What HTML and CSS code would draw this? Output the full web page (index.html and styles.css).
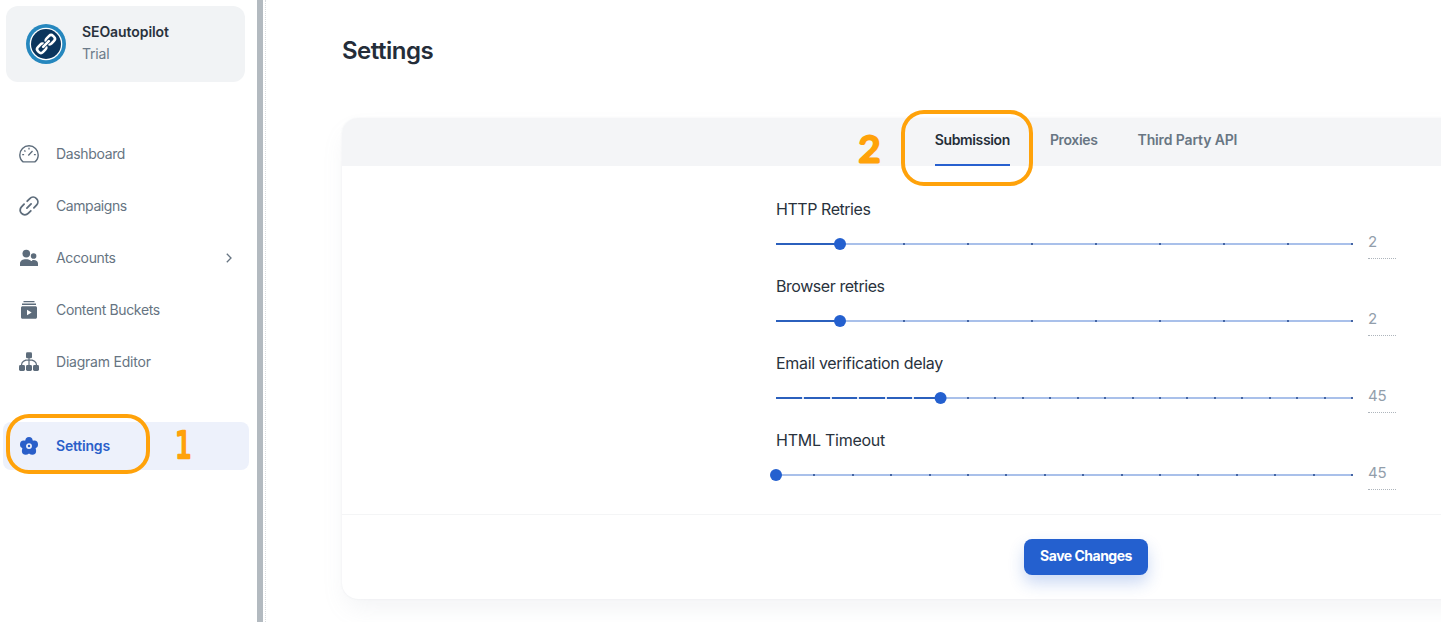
FILE: index.html
```html
<!DOCTYPE html>
<html lang="en">
<head>
<meta charset="utf-8">
<title>Settings</title>
<link rel="stylesheet" href="styles.css">
</head>
<body>
<div class="app">
  <aside class="sidebar">
    <div class="account">
      <svg class="logo" viewBox="0 0 40 40">
        <circle cx="20" cy="20" r="20" fill="#2687be"/>
        <circle cx="20" cy="20" r="16.3" fill="#fff"/>
        <circle cx="20" cy="20" r="15" fill="#0b355d"/>
        <g transform="rotate(-45 20 20)" fill="none" stroke="#fff" stroke-width="2.6">
          <rect x="9.300" y="16.500" width="9" height="7" rx="2.800"/>
          <rect x="21.700" y="16.500" width="9" height="7" rx="2.800"/>
          <path d="M14.500 20h11" stroke="#0b355d" stroke-width="4.200"/>
          <path d="M16 20h8" stroke-linecap="round" stroke-width="2.600"/>
        </g>
      </svg>
      <div class="who"><div class="name"><span>SEOautopilot</span></div><div class="plan"><span>Trial</span></div></div>
    </div>
    <nav class="menu">
      <a class="item">
        <svg class="icon" viewBox="0 0 20 20" fill="none" stroke="currentColor" stroke-width="1.4">
          <path d="M4.1 17.9C2.1 16.3.8 13.8.8 11a9.2 9.2 0 0 1 18.4 0c0 2.8-1.3 5.300-3.300 6.900z" stroke-linejoin="round"/>
          <path d="M9.300 11.500l4.200-4.500M10 3.700v1.700M3.200 10.700h1.900M14.900 10.700h1.900M5.300 6.400l1.200 1.100" stroke-width="1.300"/>
        </svg><span class="t-dashboard">Dashboard</span></a>
      <a class="item">
        <svg class="icon" viewBox="0 0 20 20" fill="none" stroke="currentColor" stroke-width="1.8" stroke-linecap="round">
          <path d="M8.200 5.200l2.600-2.600a4.700 4.700 0 0 1 6.700 6.600l-2.600 2.700M11.800 14.800l-2.600 2.600a4.700 4.700 0 0 1-6.700-6.600l2.600-2.700M7.900 12.100l4.200-4.200"/>
        </svg><span class="t-campaigns">Campaigns</span></a>
      <a class="item">
        <svg class="icon" viewBox="0 0 20 20" fill="currentColor">
          <circle cx="7.300" cy="5.600" r="3.800"/><circle cx="14.600" cy="8" r="2.800"/>
          <path d="M1 18v-2.300c0-3 2.600-4.400 6.100-4.400s5.900 1.500 5.900 4.400V18zM14.100 18v-2.300c0-1.500-.5-2.700-1.200-3.500 3.400-.8 6.100.6 6.100 3.300V18z"/>
          <path d="M12 13h3v5h-3z"/>
        </svg><span class="t-accounts">Accounts</span>
        <svg class="chevron" viewBox="0 0 10 10" fill="none" stroke="currentColor" stroke-width="1.300"><path d="M2.800.7L7 5 2.800 9.300"/></svg></a>
      <a class="item">
        <svg class="icon" viewBox="0 0 20 20" fill="currentColor">
          <path d="M4.500 1h11v1.200h-11zM3 3.500h14v1.400H3z"/>
          <path fill-rule="evenodd" d="M3.500 6.300h13c.8 0 1.500.7 1.500 1.500v9.400c0 .8-.7 1.500-1.500 1.500h-13c-.8 0-1.500-.7-1.500-1.500V7.800c0-.8.7-1.500 1.500-1.500zM8 9.700v5.600l4.700-2.800z"/>
        </svg><span class="t-content">Content Buckets</span></a>
      <a class="item">
        <svg class="icon" viewBox="0 0 20 20" fill="currentColor">
          <rect x="7" y=".3" width="6" height="6" rx="1.300"/><rect x="0" y="13" width="6" height="6" rx="1.400"/><rect x="7" y="13" width="6" height="6" rx="1.400"/><rect x="14" y="13" width="6" height="6" rx="1.400"/>
          <path d="M10 6v7M2.500 13c.2-3.500 2.500-5.200 7.500-5.200s7.300 1.700 7.500 5.200" fill="none" stroke="currentColor" stroke-width="1.200"/>
        </svg><span class="t-diagram">Diagram Editor</span></a>
      <a class="item active">
        <svg class="icon" viewBox="0 0 20 20" fill="currentColor">
          <circle cx="10" cy="4.500" r="3.600"/><circle cx="15.200" cy="8.400" r="3.800"/><circle cx="13.300" cy="14.900" r="3.800"/><circle cx="6.700" cy="14.900" r="3.800"/><circle cx="4.800" cy="8.400" r="3.800"/><circle cx="10" cy="10.500" r="6.900"/>
          <circle cx="10" cy="10.100" r="2.100" fill="none" stroke="#edf1fb" stroke-width="1.700"/>
        </svg><span class="t-settings">Settings</span></a>
    </nav>
  </aside>
  <div class="divider"></div>
  <main class="main">
    <h1><span>Settings</span></h1>
    <section class="card">
      <div class="tabs"><a class="tab on"><span class="t-sub">Submission</span></a><a class="tab"><span class="t-prox">Proxies</span></a><a class="tab"><span class="t-api">Third Party API</span></a></div>
      <div class="fields" id="fields"></div>
      <div class="actions"><button class="save"><span>Save Changes</span></button></div>
    </section>
  </main>
</div>
<div class="ring ring-one"></div>
<div class="ring ring-two"></div>
<svg class="mark mark-one" viewBox="0 0 40 60"><text x="12" y="44" textLength="17" lengthAdjust="spacingAndGlyphs">1</text></svg>
<svg class="mark mark-two" viewBox="0 0 40 60"><text x="8.500" y="43.500" textLength="22" lengthAdjust="spacingAndGlyphs">2</text></svg>
<script src="sliders.js"></script>
</body>
</html>
```
FILE: styles.css
```css
* { box-sizing: border-box; }
body { margin: 0; overflow: hidden; background: #fff; font-family: Inter, "Liberation Sans", sans-serif; color: #29323d; }
.app { display: flex; width: 1441px; height: 622px; overflow: hidden; }
.sidebar { width: 257px; flex: none; padding: 6px 8px 0 6px; }
.account { display: flex; align-items: center; width: 239px; height: 76px; padding: 0 20px; gap: 16px; background: #f1f3f5; border-radius: 12px; }
.logo { width: 40px; height: 40px; flex: none; }
.who { font-size: 14px; line-height: 22px; padding-bottom: 2px; white-space: nowrap; }
.name { font-weight: 600; letter-spacing: -.08px; }
.plan { color: #6c7a89; letter-spacing: -.2px; }
.menu { display: flex; flex-direction: column; gap: 4px; margin: 48px 0 0 -3px; }
.item { display: flex; align-items: center; width: 246px; height: 48px; padding: 0 16px; border-radius: 8px; font-size: 14px; color: #667482; white-space: nowrap; }
.item span { padding-bottom: 2px; }
.t-dashboard, .t-accounts, .t-content { letter-spacing: -.35px; }
.t-campaigns { letter-spacing: -.42px; }
.t-diagram { letter-spacing: -.22px; }
.t-settings { letter-spacing: -.2px; }
.icon { width: 20px; height: 20px; margin-right: 17px; flex: none; color: #5d6c7b; }
.chevron { width: 10px; height: 10px; margin-left: auto; margin-right: -1px; }
.active { margin-top: 32px; background: #edf1fb; color: #2a5fc9; font-weight: 600; }
.active .icon { color: #2a5fc9; }
.divider { width: 9px; flex: none; border-left: 6px solid #b3bac0; border-right: 1px dotted #d9dcdf; }
.main { flex: none; width: 1564px; padding: 33px 0 0 76px; }
h1 { margin: 0 0 49px; font-size: 24px; line-height: 36px; font-weight: 600; letter-spacing: -.5px; color: #242d39; }
.card { width: 1488px; height: 481px; border-radius: 16px; overflow: hidden; box-shadow: 0 0 2px rgba(145,158,171,.16), 0 12px 24px -4px rgba(145,158,171,.12); }
.tabs { display: flex; justify-content: center; gap: 40px; height: 48px; background: #f4f5f7; font-size: 14px; line-height: 22px; font-weight: 600; color: #687683; white-space: nowrap; }
.tab { height: 48px; padding-top: 11px; }
.t-sub { letter-spacing: -.36px; }
.t-prox { letter-spacing: -.35px; }
.t-api { letter-spacing: -.14px; }
.on { color: #252e38; border-bottom: 2px solid #2760cf; }
.fields { width: 620px; height: 348px; margin: 0 auto; padding-top: 32px; }
.field { height: 77px; }
.label { font-size: 16px; line-height: 22px; padding-bottom: 2px; }
.l-http { letter-spacing: -.45px; }
.l-browser { letter-spacing: -.44px; }
.l-email { letter-spacing: -.32px; }
.l-html { letter-spacing: -.25px; }
.row { display: flex; align-items: flex-start; gap: 16px; }
.slider { width: 576px; height: 20px; display: block; overflow: visible; margin-top: 12px; }
.value { width: 28px; height: 37px; padding-top: 8px; border-bottom: 1px dotted #aeb5bc; font-size: 15px; line-height: 24px; letter-spacing: -.2px; color: #929eab; }
.actions { display: flex; justify-content: center; border-top: 1px solid #f4f5f6; padding-top: 24px; }
.save { width: 124px; height: 36px; border: 0; border-radius: 8px; background: #2460cf; box-shadow: 0 8px 16px rgba(36,96,207,.24); color: #fff; font: 700 14px Inter, sans-serif; letter-spacing: -.5px; padding: 0 0 3px; white-space: nowrap; }
.ring { position: absolute; border: 4px solid #ffa20a; }
.ring-one { left: 6px; top: 414px; width: 144px; height: 60px; border-radius: 23px; }
.ring-two { left: 901px; top: 110px; width: 132px; height: 76px; border-radius: 23px; }
.mark { position: absolute; width: 40px; height: 60px; fill: #ffa20a; stroke: #ffa20a; stroke-width: 2.4; stroke-linejoin: round; font: 37px "DejaVu Sans", sans-serif; }
.mark-one { left: 163px; top: 414px; }
.mark-two { left: 850px; top: 118px; font: 37px Lato, sans-serif; stroke-width: 2.8; }
```
FILE: sliders.js
```js
const fields = [
  { label: 'HTTP Retries', value: 2, steps: 9, at: 1, cls: 'l-http' },
  { label: 'Browser retries', value: 2, steps: 9, at: 1, cls: 'l-browser' },
  { label: 'Email verification delay', value: 45, steps: 21, at: 6, cls: 'l-email' },
  { label: 'HTML Timeout', value: 45, steps: 15, at: 0, cls: 'l-html' }
];
document.getElementById('fields').innerHTML = fields.map(f => {
  const x = f.at * 576 / f.steps;
  let ticks = '';
  for (let i = 1; i <= f.steps; i++) {
    const left = Math.round(i * 576 / f.steps) - 1;
    if (i !== f.at) ticks += `<rect x="${left}" y="9" width="2" height="2" fill="${i < f.at ? '#dbe6f8' : '#4566a5'}"/>`;
  }
  return `<div class="field"><div class="label"><span class="${f.cls}">${f.label}</span></div><div class="row">
    <svg class="slider" viewBox="0 0 576 20"><rect y="9" width="576" height="2" fill="#a9c0ea"/><rect y="9" width="${x}" height="2" fill="#2b60bd"/>${ticks}<circle cx="${x}" cy="10" r="6" fill="#2460cf"/></svg>
    <div class="value">${f.value}</div></div></div>`;
}).join('');
```
